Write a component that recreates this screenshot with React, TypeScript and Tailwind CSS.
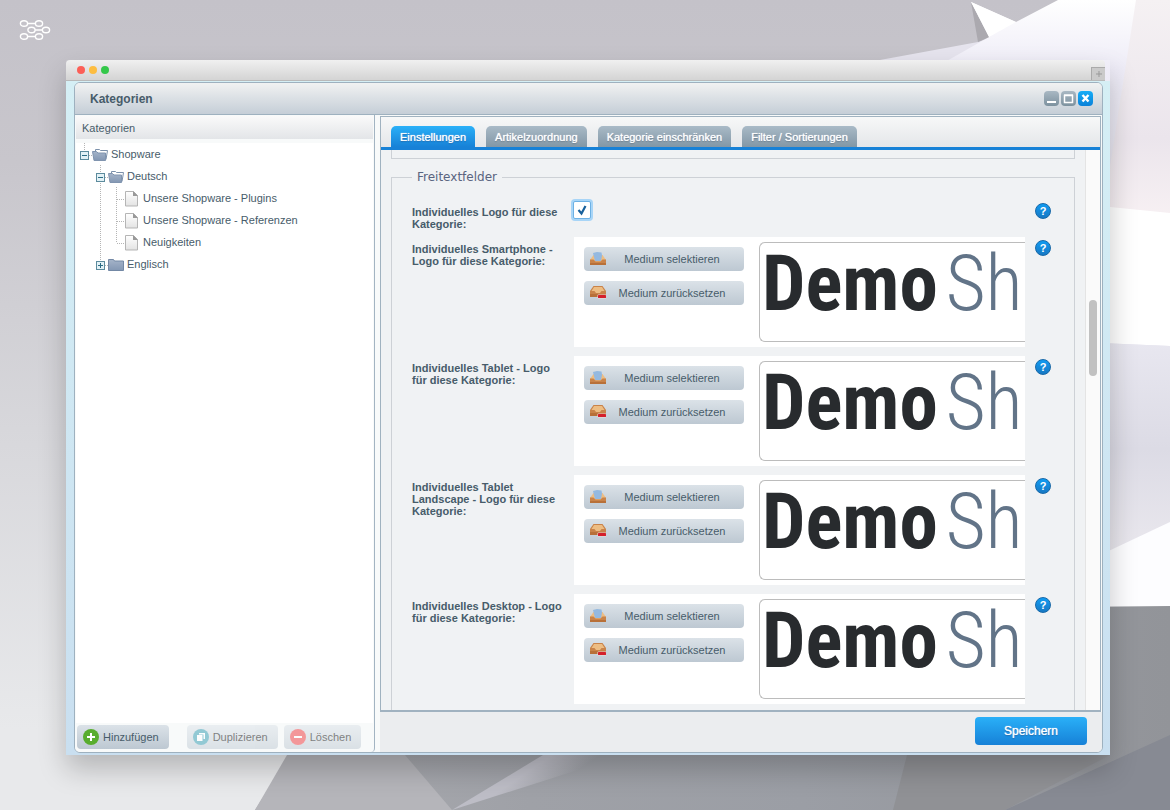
import type { ReactNode } from "react";

function Backdrop() {
  return (
    <svg
      className="absolute inset-0 h-full w-full"
      viewBox="0 0 1170 810"
      preserveAspectRatio="none"
      aria-hidden="true"
    >
      <defs>
        <linearGradient id="wall" x1="0" y1="0" x2="0" y2="1">
          <stop offset="0" stopColor="#c4c2c9" />
          <stop offset="0.2" stopColor="#c8c6cc" />
          <stop offset="0.55" stopColor="#d8d8dc" />
          <stop offset="0.9" stopColor="#e8e9eb" />
        </linearGradient>
        <linearGradient id="floor" x1="0" y1="0" x2="1" y2="0">
          <stop offset="0" stopColor="#aaabb0" />
          <stop offset="0.3" stopColor="#9fa1a7" />
          <stop offset="0.6" stopColor="#9b9ea5" />
          <stop offset="1" stopColor="#929499" />
        </linearGradient>
        <linearGradient id="streak" gradientUnits="userSpaceOnUse" x1="510" y1="770" x2="532" y2="802">
          <stop offset="0" stopColor="#bdbdc6" />
          <stop offset="0.3" stopColor="#bdbdc6" />
          <stop offset="1" stopColor="#bdbdc6" stopOpacity="0" />
        </linearGradient>
        <linearGradient id="peak" x1="0" y1="0" x2="0" y2="1">
          <stop offset="0" stopColor="#ffffff" />
          <stop offset="0.3" stopColor="#eeecf7" />
          <stop offset="1" stopColor="#e2e0ea" />
        </linearGradient>
        <linearGradient id="side" x1="0" y1="0" x2="0" y2="1">
          <stop offset="0" stopColor="#f5f1f3" />
          <stop offset="0.6" stopColor="#ebe5ec" />
          <stop offset="1" stopColor="#f9f2f4" />
        </linearGradient>
        <linearGradient id="mid" x1="0" y1="0" x2="0" y2="1">
          <stop offset="0" stopColor="#e8e7f0" />
          <stop offset="0.5" stopColor="#dcdbe5" />
          <stop offset="1" stopColor="#eae8ee" />
        </linearGradient>
      </defs>
      <rect width="1170" height="810" fill="url(#wall)" />
      <polygon points="880,60 978,42 1100,0 1170,0 1170,620 880,620" fill="#e6e4ee" />
      <polygon points="945,62 989,37 971,2 1016,22 1058,0 1170,0 1170,230 1060,230" fill="url(#peak)" />
      <polygon points="971,2 989,37 978,42" fill="#aba9af" />
      <polygon points="971,2 1016,22 989,37" fill="#ffffff" />
      <polygon points="1136,0 1170,0 1170,230 1100,230" fill="url(#side)" />
      <polygon points="1100,206 1170,213 1170,346 1100,343" fill="#ffffff" />
      <polygon points="1100,343 1170,346 1170,522 1100,555" fill="url(#mid)" />
      <polygon points="1100,555 1170,522 1170,620 1100,620" fill="#fdfdff" />
      <polygon points="380,614 1170,606 1170,810 255,810" fill="url(#floor)" />
      <polygon points="287,755 405,755 452,810 255,810" fill="#b5b5ba" />
      <polygon points="543,755 625,755 452,810" fill="url(#streak)" />
      <polygon points="907,755 1110,755 1005,810 893,810" fill="#909195" />
      <polygon points="1170,735 1170,810 1005,810" fill="#878a93" />
    </svg>
  );
}

function BrandMark() {
  return (
    <svg className="block h-6 w-8" viewBox="0 0 32 24" fill="none" stroke="#fff" strokeWidth="1.4" role="img" aria-label="Logo">
      <ellipse cx="5" cy="5.500" rx="3.600" ry="2.800" />
      <ellipse cx="20" cy="5.500" rx="3.600" ry="2.800" />
      <path d="M8.600 5.500h7.800M16.100 12h7.300M8.600 18.500h7.800" />
      <ellipse cx="12.500" cy="12" rx="3.600" ry="2.800" />
      <ellipse cx="27" cy="12" rx="3.600" ry="2.800" />
      <ellipse cx="5" cy="18.500" rx="3.600" ry="2.800" />
      <ellipse cx="20" cy="18.500" rx="3.600" ry="2.800" />
    </svg>
  );
}

type Guide = "none" | "line" | "tee" | "end";

function GuideCell({ kind, toggle }: { kind: Guide; toggle?: "open" | "closed" }) {
  return (
    <svg className="h-[22px] w-4 shrink-0" viewBox="0 0 16 22" fill="none" aria-hidden="true">
      <g stroke="#b5b5b5" strokeDasharray="1 1">
        {kind === "line" || kind === "tee" ? <path d="M8.500 0v22" /> : null}
        {kind === "end" ? <path d="M8.500 0v12" /> : null}
        {kind === "tee" || kind === "end" ? <path d="M9 12.500h7" /> : null}
      </g>
      {toggle ? (
        <g>
          <rect x="4.500" y="8.500" width="8" height="8" fill="#e2f1f6" stroke="#5c8b9d" />
          <path d={toggle === "open" ? "M6 12.500h5" : "M6 12.500h5M8.500 10v5"} stroke="#2c6c84" />
        </g>
      ) : null}
    </svg>
  );
}

function NodeIcon({ kind }: { kind: "open" | "closed" | "page" }) {
  if (kind === "page") {
    return (
      <svg className="h-[18px] w-4 shrink-0" viewBox="0 0 16 18" aria-hidden="true">
        <defs>
          <linearGradient id="sheet" x1="0" y1="0" x2="0" y2="1">
            <stop offset="0" stopColor="#fff" />
            <stop offset="1" stopColor="#e3e3e3" />
          </linearGradient>
        </defs>
        <path d="M1.500 2.500h8l4 4v10.500h-12z" fill="url(#sheet)" stroke="#b5b5b5" />
        <path d="M9 2l5 5H9z" fill="#999" />
      </svg>
    );
  }
  return (
    <svg className="h-[18px] w-4 shrink-0" viewBox="0 0 16 18" aria-hidden="true">
      <defs>
        <linearGradient id="folder" x1="0" y1="0" x2="0" y2="1">
          <stop offset="0" stopColor="#a5b4c9" />
          <stop offset="1" stopColor="#8397b3" />
        </linearGradient>
      </defs>
      {kind === "open" ? (
        <g>
          <path d="M3.500 7V4.500h4l1 1h7l-1.500 9" fill="#fff" stroke="#7b90aa" />
          <path d="M0.500 6.500h4l1.500 1.500h7.500v7.500h-11.500z" fill="url(#folder)" stroke="#8094af" />
        </g>
      ) : (
        <path d="M0.500 4.500h5l1 1.500h9v9.500h-15z" fill="url(#folder)" stroke="#7388a5" />
      )}
    </svg>
  );
}

type TreeRow = { label: string; icon: "open" | "closed" | "page"; guides: Guide[] };

const tree: TreeRow[] = [
  { label: "Shopware", icon: "open", guides: ["end"] },
  { label: "Deutsch", icon: "open", guides: ["none", "tee"] },
  { label: "Unsere Shopware - Plugins", icon: "page", guides: ["none", "line", "tee"] },
  { label: "Unsere Shopware - Referenzen", icon: "page", guides: ["none", "line", "tee"] },
  { label: "Neuigkeiten", icon: "page", guides: ["none", "line", "end"] },
  { label: "Englisch", icon: "closed", guides: ["none", "end"] },
];

function CategoryTree() {
  return (
    <ul className="flex-1 bg-white" role="tree">
      {tree.map((row) => (
        <li key={row.label} role="treeitem" className="flex h-[22px] items-center">
          {row.guides.map((kind, i) => (
            <GuideCell
              key={i}
              kind={kind}
              toggle={i === row.guides.length - 1 && row.icon !== "page" ? row.icon : undefined}
            />
          ))}
          <NodeIcon kind={row.icon} />
          <span className="pl-[3px]">{row.label}</span>
        </li>
      ))}
    </ul>
  );
}

function RoundIcon({ tone, children }: { tone: string; children: ReactNode }) {
  return (
    <svg className="h-4 w-4 shrink-0" viewBox="0 0 16 16" aria-hidden="true">
      <circle cx="8" cy="8" r="8" fill={tone} />
      {children}
    </svg>
  );
}

function SideButton({ label, disabled, children }: { label: string; disabled?: boolean; children: ReactNode }) {
  return (
    <button
      type="button"
      disabled={disabled}
      className="flex h-6 items-center gap-1 rounded bg-linear-to-b from-[#dbe2e8] to-[#bdc8d2] pr-2.5 pl-1.5 disabled:text-black disabled:opacity-50"
    >
      {children}
      {label}
    </button>
  );
}

function Sidebar() {
  return (
    <aside className="flex w-[300px] shrink-0 flex-col rounded-b border-r border-[#a3b4c2] bg-[#f8fafa] px-px pt-px">
      <h2 className="mb-1 flex h-[23px] items-center bg-linear-to-b from-[#fafafa] to-[#e3e5e8] px-1.5">Kategorien</h2>
      <CategoryTree />
      <div className="flex px-px pt-0.5 pb-[3px]">
        <SideButton label="Hinzufügen">
          <RoundIcon tone="#58ad2d">
            <path d="M8 4v8M4 8h8" stroke="#fff" strokeWidth="2" />
          </RoundIcon>
        </SideButton>
        <div className="ml-[18px] flex gap-1.5">
          <SideButton label="Duplizieren" disabled>
            <RoundIcon tone="#2d97ae">
              <path d="M6 4h6v6h-1.500V5.500H6z" fill="#fff" />
              <rect x="4" y="6" width="5.500" height="6" fill="#fff" />
            </RoundIcon>
          </SideButton>
          <SideButton label="Löschen" disabled>
            <RoundIcon tone="#f0373b">
              <path d="M4 8h8" stroke="#fff" strokeWidth="2" />
            </RoundIcon>
          </SideButton>
        </div>
      </div>
    </aside>
  );
}

function TrayIcon({ reset }: { reset?: boolean }) {
  return (
    <svg className="h-4 w-4 shrink-0" viewBox="0 0 16 16" aria-hidden="true">
      {reset ? (
        <g>
          <path d="M3.500 1h9L16 6v6H0V6z" fill="#c98349" />
          <path d="M4 2h8l2.500 4H11.500l-1.500 2H6L4.500 6H1.500z" fill="#edbd83" />
          <path d="M0 9h16v3H0z" fill="#b87038" />
          <rect x="7.500" y="9.500" width="9" height="4" rx="1" fill="#f1dcd6" />
          <rect x="8" y="10" width="8" height="3" rx="0.500" fill="#d4202b" />
        </g>
      ) : (
        <g>
          <path d="M0 9l3.500-5h9L16 9v5H0z" fill="#edbd83" />
          <path d="M3 2l4-1 4.500 0.500 0.500 3-1 5.500H5z" fill="#94b9e0" />
          <path d="M0 8.500h3.500L5.500 10.500h5l2-2H16v5.500H0z" fill="#c98349" />
          <path d="M0 12h16v2H0z" fill="#b87038" />
        </g>
      )}
    </svg>
  );
}

function MediaButton({ label, reset }: { label: string; reset?: boolean }) {
  return (
    <button
      type="button"
      className="flex h-6 w-40 items-center rounded bg-linear-to-b from-[#dbe2e8] to-[#bdc8d2] px-1.5"
    >
      <TrayIcon reset={reset} />
      <span className="flex-1 text-center">{label}</span>
    </button>
  );
}

function HelpButton() {
  return (
    <button
      type="button"
      aria-label="Hilfe"
      className="h-4 w-4 shrink-0 rounded-full border border-[#1668a8] bg-linear-to-b from-[#0f9bf2] to-[#1779c4] text-center text-[11px] leading-[14px] font-bold text-white"
    >
      ?
    </button>
  );
}

function MediaField({ label }: { label: string }) {
  return (
    <div className="flex items-start">
      <h3 className="w-[162px] shrink-0 pt-1.5 pr-2 leading-3 font-bold">{label}</h3>
      <div className="flex h-[110px] min-w-0 flex-1 gap-[15px] bg-white pl-2.5">
        <div className="flex shrink-0 flex-col gap-2.5 pt-2.5">
          <MediaButton label="Medium selektieren" />
          <MediaButton label="Medium zurücksetzen" reset />
        </div>
        <div className="mt-[5px] h-[100px] min-w-0 flex-1 rounded-l-md border border-r-0 border-[#bcbcbc] pl-0.5">
          <div className="flex items-baseline font-['Roboto_Condensed','Roboto',sans-serif] text-[77px] leading-[83px] whitespace-nowrap">
            <span className="font-bold text-[#282b2e]">Demo</span>
            <span className="pl-2 font-light text-[#627488]">Sh</span>
          </div>
        </div>
      </div>
      <div className="flex pt-[3px] pl-2.5">
        <HelpButton />
      </div>
    </div>
  );
}

const mediaLabels = [
  "Individuelles Smartphone - Logo für diese Kategorie:",
  "Individuelles Tablet - Logo für diese Kategorie:",
  "Individuelles Tablet Landscape - Logo für diese Kategorie:",
  "Individuelles Desktop - Logo für diese Kategorie:",
];

function SettingsForm() {
  return (
    <form id="settings" className="min-w-0 flex-1 overflow-hidden px-2.5">
      <div className="h-[9px] border border-t-0 border-[#cdd1d6]" />
      <fieldset className="mt-2.5 h-[600px] min-w-0 border border-[#cdd1d6] pr-[23px] pl-5">
        <legend className="px-[5px] font-['DejaVu_Sans',sans-serif] text-[12px] leading-4 text-[#59647f]">
          Freitextfelder
        </legend>
        <div className="mt-4 mb-1.5 flex h-[30px] items-start">
          <label htmlFor="own-logo" className="w-[161px] shrink-0 pt-[5px] pr-2 leading-3 font-bold">
            Individuelles Logo für diese Kategorie:
          </label>
          <div className="grid flex-1">
            <input
              id="own-logo"
              type="checkbox"
              defaultChecked
              className="peer col-start-1 row-start-1 h-[18px] w-[18px] appearance-none rounded-xs border border-[#6db1e4] bg-white ring-2 ring-[#a8d5f7]"
            />
            <svg
              className="pointer-events-none invisible col-start-1 row-start-1 h-[18px] w-[18px] peer-checked:visible"
              viewBox="0 0 18 18"
              fill="none"
              aria-hidden="true"
            >
              <path d="M5.500 9l3 3.500 4-7.500" stroke="#17609b" strokeWidth="2.200" />
            </svg>
          </div>
          <div className="flex pt-0.5">
            <HelpButton />
          </div>
        </div>
        <div className="flex flex-col gap-[9px]">
          {mediaLabels.map((label) => (
            <MediaField key={label} label={label} />
          ))}
        </div>
      </fieldset>
    </form>
  );
}

const tabs = ["Einstellungen", "Artikelzuordnung", "Kategorie einschränken", "Filter / Sortierungen"];

function Tabs() {
  return (
    <div role="tablist" className="flex h-[33px] shrink-0 items-end gap-[11px] border-b-3 border-[#1781d7] bg-linear-to-b from-[#f7f8f8] to-[#e4e6e9] px-2.5">
      {tabs.map((tab, i) => (
        <button
          key={tab}
          type="button"
          role="tab"
          aria-selected={i === 0}
          className="h-[21px] rounded-t-[5px] bg-linear-to-b from-[#a9bac7] to-[#8297a6] px-[9px] text-white [text-shadow:0_0_1px_#fff,0_1px_1px_#5d7283] aria-selected:from-[#2ab0f8] aria-selected:to-[#1781d7] aria-selected:[text-shadow:0_0_1px_#fff,0_1px_1px_#0d5da5]"
        >
          {tab}
        </button>
      ))}
    </div>
  );
}

function WindowControls() {
  return (
    <div className="flex gap-0.5">
      <button type="button" aria-label="Minimieren" className="h-[15px] w-[15px] rounded bg-linear-to-b from-[#a9b8c3] to-[#7d929f]">
        <svg viewBox="0 0 15 15" fill="none"><path d="M3 11h9" stroke="#fff" strokeWidth="2" /></svg>
      </button>
      <button type="button" aria-label="Maximieren" className="h-[15px] w-[15px] rounded bg-linear-to-b from-[#a9b8c3] to-[#7d929f]">
        <svg viewBox="0 0 15 15" fill="none"><path d="M3.500 4.500h8v7h-8zM3 4h9" stroke="#fff" strokeWidth="1.500" /></svg>
      </button>
      <button type="button" aria-label="Schließen" className="h-[15px] w-[15px] rounded bg-linear-to-b from-[#16adf7] to-[#0b82d9]">
        <svg viewBox="0 0 15 15" fill="none"><path d="M4.500 4l6 6.500M10.500 4l-6 6.500" stroke="#fff" strokeWidth="2.400" /></svg>
      </button>
    </div>
  );
}

function CategoryWindow() {
  return (
    <section className="flex min-h-0 flex-1 flex-col overflow-hidden rounded-md border border-[#9eb1bf] bg-[#f8fafa]">
      <header className="flex h-8 shrink-0 items-center justify-between border-b border-[#9eb1bf] bg-linear-to-b from-[#f1f2f2] to-[#c5ced7] pr-[9px] pl-[15px]">
        <h1 className="text-[12px] font-bold">Kategorien</h1>
        <WindowControls />
      </header>
      <div className="flex min-h-0 flex-1">
        <Sidebar />
        <div className="ml-[5px] flex min-w-0 flex-1 flex-col pt-px">
          <div className="mr-px flex min-h-0 flex-1 flex-col border border-b-2 border-[#a0b2c0] bg-[#f0f2f4]">
            <Tabs />
            <div className="flex min-h-0 flex-1">
              <SettingsForm />
              <div className="flex w-[15px] shrink-0 justify-center border-l border-[#e4e4e4] bg-[#fafafa]">
                <div className="mt-[150px] h-[76px] w-2 rounded-full bg-[#c1c1c1]" />
              </div>
            </div>
          </div>
          <footer className="flex h-[40px] shrink-0 justify-end bg-[#ebedef] pt-[5px] pr-[15px]">
            <button
              type="submit"
              form="settings"
              className="h-7 w-28 rounded bg-linear-to-b from-[#2ab0f8] to-[#1781d7] text-[12px] text-white [text-shadow:0_0_1px_#fff,0_1px_1px_#0d5da5]"
            >
              Speichern
            </button>
          </footer>
        </div>
      </div>
    </section>
  );
}

export default function App() {
  return (
    <div className="relative h-screen overflow-hidden font-['Liberation_Sans',sans-serif] text-[11px] leading-4 text-[#475c6a]">
      <Backdrop />
      <div className="relative flex h-full flex-col pr-[60px] pb-[55px] pl-[66px]">
        <div className="-ml-[47px] h-[60px] shrink-0 pt-[18px]">
          <BrandMark />
        </div>
        <main className="flex min-h-0 flex-1 flex-col shadow-[0_14px_26px_rgba(0,0,0,0.22)]">
          <div className="mr-[5px] flex h-[21px] shrink-0 items-end justify-between rounded-t border-b border-[#b9b9b9] bg-linear-to-b from-[#f0f0f0] to-[#d4d4d4] pl-[11px]">
            <div className="flex gap-1 self-center">
              <span className="h-2 w-2 rounded-full bg-[#fc5f57]" />
              <span className="h-2 w-2 rounded-full bg-[#fdbd40]" />
              <span className="h-2 w-2 rounded-full bg-[#34c84a]" />
            </div>
            <button
              type="button"
              aria-label="Neuer Tab"
              className="flex h-[13px] w-3.5 items-center justify-center border-t border-l border-[#aaa] bg-[#cacaca]"
            >
              <svg className="h-2 w-2" viewBox="0 0 8 8"><path d="M4 1v6M1 4h6" stroke="#999" /></svg>
            </button>
          </div>
          <div className="flex min-h-0 flex-1 flex-col bg-linear-to-b from-[#d5eff5] to-[#c9dff0] pt-px pr-[7px] pb-0.5 pl-2">
            <CategoryWindow />
          </div>
        </main>
      </div>
    </div>
  );
}
